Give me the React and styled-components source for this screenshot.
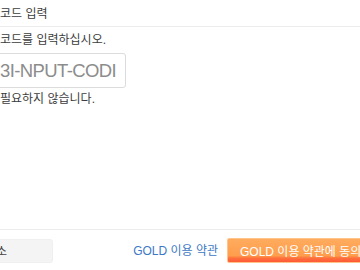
import React from "react";
import styled, { createGlobalStyle } from "styled-components";

const Global = createGlobalStyle`
  html, body { margin: 0; padding: 0; background: #fff; }
  body { font-family: "Liberation Sans", "Noto Sans CJK KR", sans-serif; }
  * { box-sizing: border-box; }
`;

const Dialog = styled.div`
  width: 360px;
  height: 270px;
  overflow: hidden;
  display: flex;
  flex-direction: column;
  background: #fff;
  color: #3c3c3c;
  font-size: 12px;
`;

const Header = styled.div`
  height: 27px;
  flex: none;
  display: flex;
  align-items: center;
  padding-bottom: 1px;
  border-bottom: 1px solid #ececec;
  white-space: nowrap;
`;

const Body = styled.div`
  display: flex;
  flex-direction: column;
  align-items: flex-start;
  padding-top: 5px;
`;

const Line = styled.p`
  margin: ${(p) => p.$mt || 0}px 0 0;
  line-height: 16px;
  white-space: nowrap;
`;

const CodeBox = styled.div`
  margin: 5px 0 0 -30px;
  width: 156px;
  height: 35px;
  border: 1px solid #dcdcdc;
  border-radius: 3px;
  display: flex;
  align-items: center;
  padding-left: 29px;
  font-size: 18.5px;
  letter-spacing: -0.6px;
  color: #8c8c8c;
  white-space: nowrap;
  overflow: hidden;
  padding-top: 1px;
`;

const Footer = styled.div`
  margin-top: auto;
  border-top: 1px solid #ececec;
  padding: 8px 0 7px;
  display: flex;
  align-items: center;
  white-space: nowrap;
`;

const CancelButton = styled.button`
  margin-left: -61px;
  width: 114px;
  height: 24px;
  border: 1px solid #efefef;
  border-radius: 3px;
  background: #f4f4f4;
  color: #444;
  font: inherit;
  font-size: 12px;
  padding: 0;
`;

const TermsLink = styled.a`
  margin-left: auto;
  color: #3d78c4;
  text-decoration: none;
  font-size: 12px;
  line-height: 16px;
  margin-top: 1px;
`;

const AgreeButton = styled.button`
  margin-left: 9px;
  margin-right: -33px;
  flex: none;
  width: 166px;
  height: 25px;
  padding: 0 12px;
  border: 1px solid #ffc48a;
  border-radius: 2px;
  background: linear-gradient(#ffab5e 0%, #ff9e4c 72%, #ff6f3c 84%, #ff5a36 100%);
  color: #fff;
  font: inherit;
  font-size: 12px;
  text-align: left;
  white-space: nowrap;
  overflow: hidden;
`;

export default function App() {
  return (
    <>
      <Global />
      <Dialog>
        <Header>코드 입력</Header>
        <Body>
          <Line>코드를 입력하십시오.</Line>
          <CodeBox>3I-NPUT-CODI</CodeBox>
          <Line $mt={3}>필요하지 않습니다.</Line>
        </Body>
        <Footer>
          <CancelButton>취소</CancelButton>
          <TermsLink href="#">GOLD 이용 약관</TermsLink>
          <AgreeButton>GOLD 이용 약관에 동의</AgreeButton>
        </Footer>
      </Dialog>
    </>
  );
}
